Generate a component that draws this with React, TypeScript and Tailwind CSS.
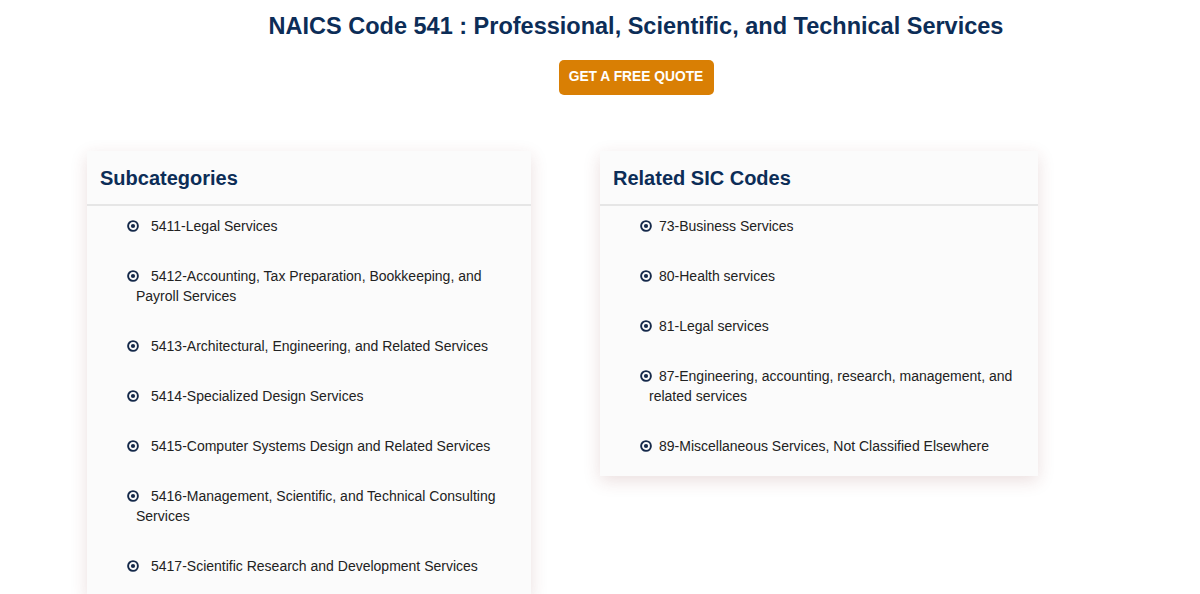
const subcategories = [
  '5411-Legal Services',
  '5412-Accounting, Tax Preparation, Bookkeeping, and Payroll Services',
  '5413-Architectural, Engineering, and Related Services',
  '5414-Specialized Design Services',
  '5415-Computer Systems Design and Related Services',
  '5416-Management, Scientific, and Technical Consulting Services',
  '5417-Scientific Research and Development Services',
];

const sicCodes = [
  '73-Business Services',
  '80-Health services',
  '81-Legal services',
  '87-Engineering, accounting, research, management, and related services',
  '89-Miscellaneous Services, Not Classified Elsewhere',
];

const DotCircle = () => (
  <svg width="12" height="12" viewBox="0 0 12 12" className="inline-block align-[-1px]">
    <circle cx="6" cy="6" r="4.9" fill="none" stroke="#15294a" strokeWidth="1.9" />
    <circle cx="6" cy="6" r="2.1" fill="#15294a" />
  </svg>
);

const Card = ({
  title,
  items,
  width,
  gap,
}: {
  title: string;
  items: string[];
  width: string;
  gap: string;
}) => (
  <div className={`${width} bg-[#fbfbfb] shadow-[0_5px_16px_rgba(120,40,40,0.15)]`}>
    <div className="h-[55px] flex items-center px-[13px] border-b-2 border-[#e6e6e6]">
      <h2 className="text-[20px] font-bold text-[#0c2d57]">{title}</h2>
    </div>
    <ul className="pt-[10px] pb-[20px] pl-[49px] pr-[14px]">
      {items.map((item) => (
        <li key={item} className="text-[14px] leading-[20px] text-[#222] mb-[30px] last:mb-0">
          <span className="-ml-[9px]">
            <DotCircle />
          </span>
          <span className={gap}>{item}</span>
        </li>
      ))}
    </ul>
  </div>
);

export default function App() {
  return (
    <div className="w-full h-[594px] overflow-hidden bg-white font-['Liberation_Sans',Arial,sans-serif]">
      <div className="pl-[72px]">
        <h1 className="mt-[10px] h-[30px] leading-[32px] text-center text-[23.5px] font-bold text-[#0c2d57]">
          NAICS Code 541 : Professional, Scientific, and Technical Services
        </h1>
        <div className="flex justify-center mt-[20px]">
          <button className="h-[35px] w-[155px] rounded-[5px] bg-[#d97f04] text-white text-[13.8px] font-bold uppercase">
            Get a free quote
          </button>
        </div>
        <div className="flex items-start gap-[69px] pl-[15px] mt-[56px]">
          <Card title="Subcategories" items={subcategories} width="w-[444px]" gap="ml-[12px]" />
          <Card title="Related SIC Codes" items={sicCodes} width="w-[438px]" gap="ml-[7px]" />
        </div>
      </div>
    </div>
  );
}
